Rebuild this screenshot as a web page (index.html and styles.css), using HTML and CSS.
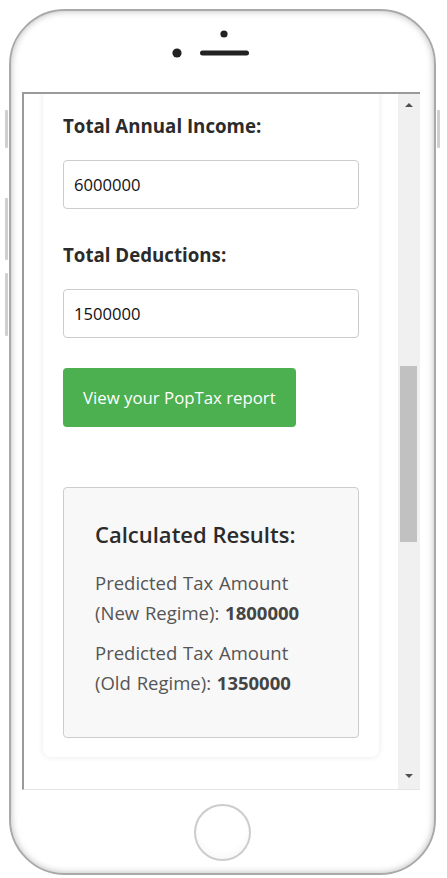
FILE: index.html
```html
<!DOCTYPE html>
<html lang="en">
<head>
<meta charset="utf-8">
<title>PopTax</title>
<link rel="stylesheet" href="styles.css">
</head>
<body>
<div class="phone">
  <span class="side-btn side-left b1"></span>
  <span class="side-btn side-left b2"></span>
  <span class="side-btn side-left b3"></span>
  <span class="side-btn side-right b1"></span>
  <div class="notch">
    <svg width="427" height="81" viewBox="0 0 427 81" aria-hidden="true">
      <circle cx="213" cy="23" r="3.6" fill="#222"/>
      <circle cx="166" cy="42" r="4.6" fill="#222"/>
      <line x1="191.5" y1="42" x2="235.5" y2="42" stroke="#222" stroke-width="5" stroke-linecap="round"/>
    </svg>
  </div>
  <div class="screen">
    <div class="viewport">
      <div class="card">
        <label class="field-label">Total Annual Income:</label>
        <div class="input">6000000</div>
        <label class="field-label">Total Deductions:</label>
        <div class="input">1500000</div>
        <button class="btn">View your PopTax report</button>
        <div class="results">
          <h2 class="results-title">Calculated Results:</h2>
          <p class="result">Predicted Tax Amount (New Regime): <b>1800000</b></p>
          <p class="result">Predicted Tax Amount (Old Regime): <b>1350000</b></p>
        </div>
      </div>
    </div>
    <div class="scrollbar">
      <span class="arrow up"></span>
      <div class="track"><span class="thumb"></span></div>
      <span class="arrow down"></span>
    </div>
  </div>
  <div class="home-area">
    <span class="home-btn"></span>
  </div>
</div>
</body>
</html>
```
FILE: styles.css
```css
* { box-sizing: border-box; }
html, body { margin: 0; padding: 0; background: #fff; }
body { font-family: "Open Sans", "Noto Sans", sans-serif; }

.phone {
  position: relative;
  margin: 9px 0 0 9px;
  width: 427px;
  height: 866px;
  border: 2px solid #a9a9a9;
  border-radius: 56px;
  background: #fff;
  box-shadow: inset 0 0 7px rgba(0,0,0,0.28);
  display: flex;
  flex-direction: column;
}

.side-btn {
  position: absolute;
  width: 3px;
  background: #cfcfcf;
  border-radius: 1px;
}
.side-left { left: -6px; }
.side-right { right: -6px; }
.b1 { top: 99px; height: 38px; }
.b2 { top: 187px; height: 62px; }
.b3 { top: 262px; height: 63px; }

.notch { height: 81px; flex: none; }
.notch svg { display: block; }

.screen {
  margin-left: 11px;
  width: 398px;
  height: 698px;
  flex: none;
  border-top: 2px solid #9a9a9a;
  border-left: 2px solid #9a9a9a;
  border-bottom: 1px solid #e4e4e4;
  display: flex;
  background: #fff;
}

.viewport {
  flex: 1;
  overflow: hidden;
  background: #fff;
}

.card {
  margin: -12px 19px 0;
  padding: 0 20px 19px;
  background: #fff;
  border-radius: 8px;
  box-shadow: 0 0 6px rgba(0,0,0,0.09);
}

.field-label {
  display: block;
  padding-top: 32px;
  font-size: 18.7px;
  line-height: 24px;
  font-weight: 700;
  color: #2b2b2b;
}

.input {
  margin-top: 22px;
  height: 49px;
  border: 1px solid #cccccc;
  border-radius: 4px;
  padding: 0 10px;
  font-size: 16.6px;
  line-height: 47px;
  color: #111;
}
.input + .field-label { padding-top: 34px; }

.btn {
  display: block;
  margin-top: 30px;
  height: 59px;
  padding: 0 20px;
  border: none;
  border-radius: 4px;
  background: #4caf50;
  color: #fff;
  font-family: inherit;
  font-size: 16.8px;
}

.results {
  margin-top: 60px;
  height: 251px;
  background: #f8f8f8;
  border: 1px solid #cccccc;
  border-radius: 4px;
  padding: 31px 36px 30px 31px;
}
.results-title {
  margin: 0 0 19px;
  font-size: 22px;
  line-height: 30px;
  font-weight: 600;
  color: #2b2b2b;
}
.result {
  margin: 0 0 10px;
  font-size: 18.5px;
  line-height: 30px;
  color: #555;
  word-spacing: 1px;
}
.result b { color: #444; }

.scrollbar {
  width: 22px;
  flex: none;
  background: #f0f0f0;
  display: flex;
  flex-direction: column;
  align-items: center;
}
.arrow {
  width: 0; height: 0;
  border-left: 4.5px solid transparent;
  border-right: 4.5px solid transparent;
  flex: none;
}
.arrow.up { margin-top: 9px; border-bottom: 4.5px solid #505050; }
.arrow.down { margin-bottom: 11px; border-top: 4.5px solid #505050; }
.track { flex: 1; width: 100%; padding: 0 3px 0 2px; }
.thumb {
  display: block;
  margin-top: 259px;
  height: 176px;
  background: #c1c1c1;
}

.home-area {
  flex: 1;
  display: flex;
  justify-content: center;
  align-items: flex-start;
  padding-top: 14px;
}
.home-btn {
  width: 57px;
  height: 57px;
  border-radius: 50%;
  border: 2px solid #cdcdcd;
  background: radial-gradient(circle at 50% 40%, #fff 55%, #f1f1f1 100%);
}
```
